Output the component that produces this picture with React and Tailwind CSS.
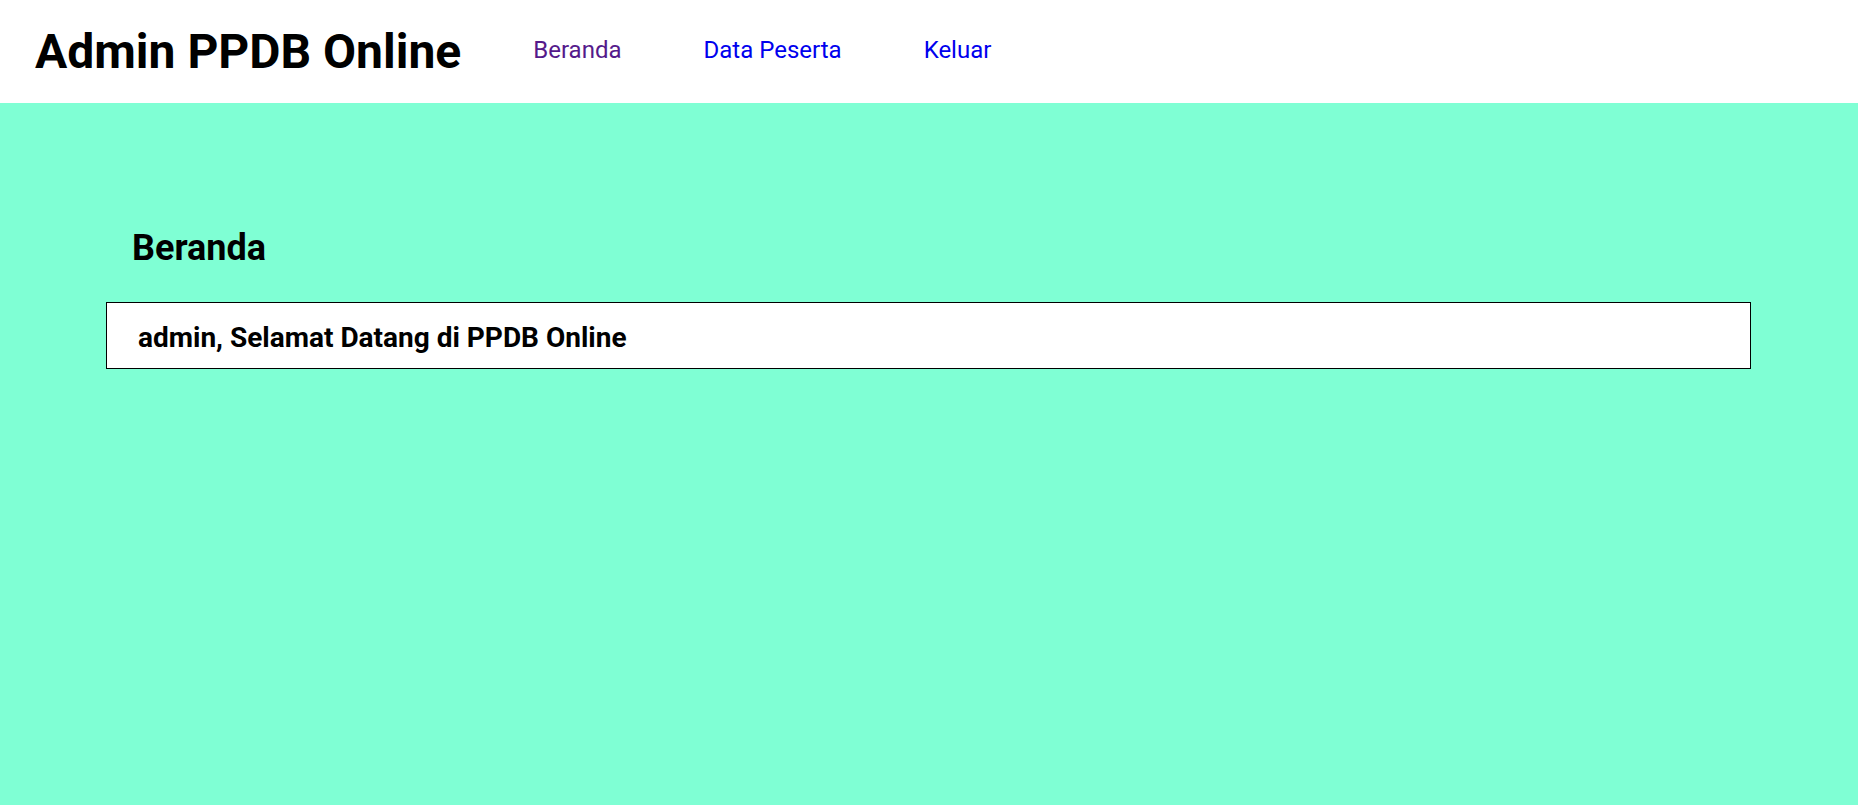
export default function App() {
  return (
    <div className="min-h-screen bg-[#7fffd4] font-['Roboto',sans-serif] text-black">
      <header className="flex h-[103px] items-center bg-white pl-[35px]">
        <h1 className="text-[48px] font-bold leading-none">Admin PPDB Online</h1>
        <nav className="-mt-[3px] ml-[72px] flex gap-[82px] text-[24px]">
          <a href="#" className="text-[#551a8b]">Beranda</a>
          <a href="#" className="text-[#0000ee]">Data Peserta</a>
          <a href="#" className="text-[#0000ee]">Keluar</a>
        </nav>
      </header>

      <main className="pl-[106px] pr-[107px] pt-[127px]">
        <h2 className="pl-[26px] text-[36px] font-bold leading-none">Beranda</h2>
        <div className="mt-[36px] flex h-[67px] items-center border border-black bg-white pl-[31px] pt-[4px]">
          <h3 className="text-[28px] font-bold">admin, Selamat Datang di PPDB Online</h3>
        </div>
      </main>
    </div>
  )
}
